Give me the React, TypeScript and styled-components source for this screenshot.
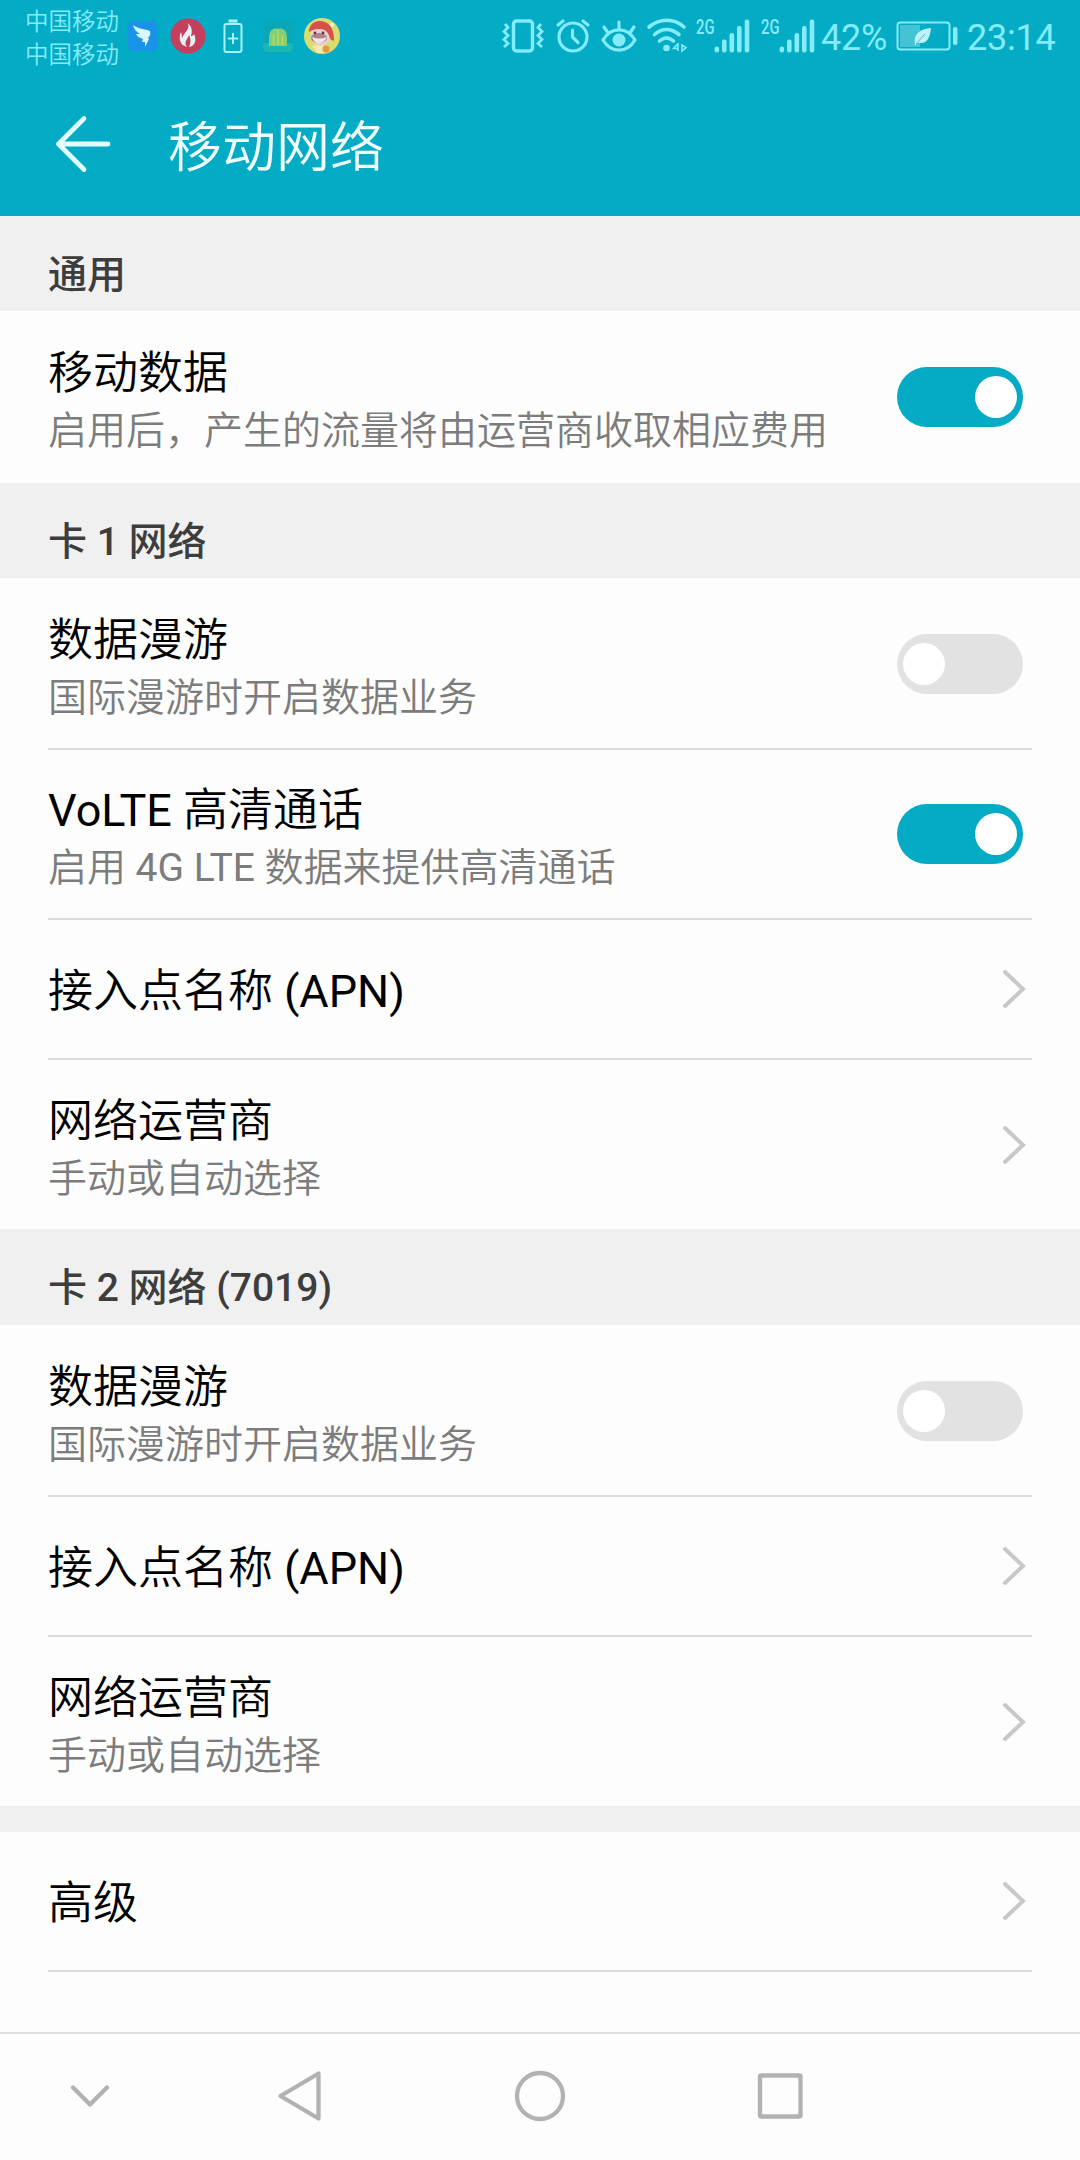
import React from "react";
import styled, { createGlobalStyle } from "styled-components";

const GlobalStyle = createGlobalStyle`
  * { box-sizing: border-box; }
  body { margin: 0; background: #fdfdfd; }
`;

const TEAL = "#04abc5";
const STATUS = "#83ecfb";

const Screen = styled.div`
  width: 1080px;
  height: 2160px;
  display: flex;
  flex-direction: column;
  overflow: hidden;
  background: #fdfdfd;
  font-family: Roboto, "Noto Sans CJK SC", sans-serif;
`;

const Header = styled.header`
  height: 216px;
  flex: none;
  background: ${TEAL};
`;

const StatusBar = styled.div`
  height: 72px;
  display: flex;
  align-items: center;
  padding-left: 25px;
  padding-right: 24px;
  color: ${STATUS};
`;

const Carriers = styled.div`
  display: flex;
  flex-direction: column;
  width: 102px;
  padding-top: 5px;
  font-size: 23.5px;
  line-height: 33px;
  font-weight: 350;
`;

const StatusIcon = styled.svg<{ $ml?: number }>`
  display: block;
  flex: none;
  margin-left: ${(p) => p.$ml ?? 0}px;
`;

const Spacer = styled.div`
  flex: 1;
`;

const StatusText = styled.span<{ $ml: number; $w: number }>`
  flex: none;
  width: ${(p) => p.$w}px;
  margin-left: ${(p) => p.$ml}px;
  padding-top: 3px;
  font-size: 36px;
  line-height: 40px;
  font-weight: 400;
  letter-spacing: -0.2px;
  white-space: nowrap;
`;

const TitleBar = styled.div`
  height: 144px;
  display: flex;
  align-items: center;
  padding-left: 54px;
`;

const Title = styled.h1`
  margin: 0 0 0 54px;
  padding-top: 9px;
  font-size: 54px;
  line-height: 72px;
  font-weight: 350;
  color: #f2ffff;
`;

const List = styled.main`
  flex: none;
  height: 1816px;
`;

const SectionTitle = styled.h2<{ $h?: number }>`
  margin: 0;
  height: ${(p) => p.$h ?? 95}px;
  padding: 31px 0 0 48px;
  background: #f0f0f0;
  color: #3d3d3d;
  font-size: 39px;
  line-height: 56px;
  font-weight: 500;
`;

const Gap = styled.div`
  height: 26px;
  background: #f0f0f0;
`;

const Row = styled.div<{ $h: number; $line?: boolean }>`
  height: ${(p) => p.$h}px;
  margin: 0 48px;
  padding-top: ${(p) => (p.$line && p.$h === 172 ? 2 : 0)}px;
  display: flex;
  align-items: center;
  justify-content: space-between;
  border-bottom: ${(p) => (p.$line ? "2px solid #dcdcdc" : "0")};
`;

const Labels = styled.div<{ $double: boolean }>`
  display: flex;
  flex-direction: column;
  padding-top: ${(p) => (p.$double ? 8 : 6)}px;
`;

const Name = styled.div`
  font-size: 45px;
  line-height: 60px;
  font-weight: 350;
  color: #000;
`;

const Note = styled.div`
  font-size: 39px;
  line-height: 54px;
  font-weight: 350;
  color: #7c7c7c;
`;

const Latin = styled.span`
  font-weight: 400;
`;

const Track = styled.div<{ $on: boolean }>`
  width: 126px;
  height: 60px;
  flex: none;
  margin-right: 9px;
  padding: 0 6px;
  border-radius: 30px;
  display: flex;
  align-items: center;
  justify-content: ${(p) => (p.$on ? "flex-end" : "flex-start")};
  background: ${(p) => (p.$on ? TEAL : "#e2e2e2")};
`;

const Knob = styled.div`
  width: 42px;
  height: 42px;
  border-radius: 50%;
  background: #fff;
`;

const ArrowBox = styled.svg`
  display: block;
  flex: none;
  margin-right: 5px;
`;

const NavBar = styled.nav`
  flex: 1;
  border-top: 2px solid #dfdfdf;
  display: flex;
  align-items: center;
  padding: 0 0 2px 60px;
`;

const NavIcon = styled.svg<{ $ml?: number }>`
  display: block;
  flex: none;
  margin-left: ${(p) => p.$ml ?? 0}px;
  fill: none;
  stroke: #b2b2b2;
  stroke-width: 4.3;
  stroke-linecap: round;
  stroke-linejoin: round;
`;

const Signal = ({ ml }: { ml: number }) => (
  <StatusIcon $ml={ml} width="55" height="44" viewBox="0 -4 55 44" fill={STATUS}>
    <text
      x="0"
      y="16"
      fontFamily="Roboto, sans-serif"
      fontSize="20.5"
      fontWeight="500"
      textLength="18.5"
      lengthAdjust="spacingAndGlyphs"
    >
      2G
    </text>
    <rect x="18.5" y="28.5" width="4.6" height="6" rx="2.2" />
    <rect x="26" y="21.5" width="4.6" height="13" rx="2" />
    <rect x="33.5" y="15" width="4.6" height="19.5" rx="2" />
    <rect x="41" y="8" width="4.6" height="26.5" rx="2" />
    <rect x="48.7" y="1.5" width="4.6" height="33" rx="2" />
  </StatusIcon>
);

const Arrow = () => (
  <ArrowBox width="26" height="42" viewBox="0 0 26 42" fill="none" stroke="#c8c8c8" strokeWidth="4" strokeLinecap="round">
    <path d="M4 4 L22 21 L4 38" />
  </ArrowBox>
);

// Latin runs keep the regular weight next to the lighter Chinese glyphs.
const mixed = (text: string) =>
  text
    .split(/([A-Za-z0-9()][A-Za-z0-9() ]*)/)
    .map((part, i) => (i % 2 ? <Latin key={i}>{part}</Latin> : part));

type ItemProps = {
  name: string;
  note?: string;
  on?: boolean;
  h: number;
  line?: boolean;
};

const Item = ({ name, note, on, h, line }: ItemProps) => (
  <Row $h={h} $line={line}>
    <Labels $double={!!note}>
      <Name>{mixed(name)}</Name>
      {note && <Note>{mixed(note)}</Note>}
    </Labels>
    {on === undefined ? (
      <Arrow />
    ) : (
      <Track $on={on}>
        <Knob />
      </Track>
    )}
  </Row>
);

export default function App() {
  return (
    <Screen lang="zh-CN">
      <GlobalStyle />
      <Header>
        <StatusBar>
          <Carriers>
            <span>中国移动</span>
            <span>中国移动</span>
          </Carriers>
          <StatusIcon $ml={1} width="30" height="32" viewBox="0 0 30 32">
            <rect x="0" y="1" width="30" height="30" rx="5" fill="#1893e8" />
            <path d="M5 5 C10 9 17 9 22 11 C23 15 21 17 20 18 L21 19 L17 27 L17 22 L14 22 L15 19 C11 18 9 16 8 14 L12 14 C8 12 6 9 5 5Z" fill="#d8f6ff" />
          </StatusIcon>
          <StatusIcon $ml={12} width="36" height="36" viewBox="0 0 36 36">
            <circle cx="18" cy="18" r="17.5" fill="#c53f5d" />
            <path d="M18 5 C20 11 15 14 13 18 C10 23 13 28 17 29 C13 24 18 21 19 17 C21 21 21 24 19 29 C25 28 27 22 24 16 C23 18 22 18 21 18 C23 12 21 8 18 5Z M11 14 C9 18 9 25 14 28 C11 23 13 19 11 14Z" fill="#e5f1f4" />
          </StatusIcon>
          <StatusIcon $ml={17} width="20" height="36" viewBox="0 0 20 36" fill="none" stroke="#a5f2f8" strokeWidth="2">
            <path d="M5.5 3 H14.5" strokeWidth="3" />
            <rect x="1.5" y="6" width="17" height="28" rx="2" />
            <path d="M10 15 V26 M4.8 20.5 H15.2" />
          </StatusIcon>
          <StatusIcon $ml={20} width="30" height="34" viewBox="0 0 30 34">
            <rect width="30" height="33" y="1" rx="5" fill="#08a8ba" />
            <path d="M0 24 H30 V28 Q30 33 25 33 H5 Q0 33 0 28Z" fill="#17b9b1" />
            <path d="M6 27 V19 C6 13 9 9.500 12 9.500 H18 C21 9.500 24 13 24 19 V27Z" fill="#83cf77" />
            <path d="M10.500 26 V16 M19.500 26 V16 M15 11 V26" stroke="#bddb5e" strokeWidth="1.5" />
          </StatusIcon>
          <StatusIcon $ml={11} width="36" height="36" viewBox="0 0 36 36">
            <circle cx="18" cy="18" r="18" fill="#d9dd70" />
            <circle cx="17" cy="17" r="10.5" fill="#e8d0cb" />
            <path d="M5 14 C5 5 13 1 21 4 C27 6 30 13 30 23 L26 21 C25 14 21 11 15 11 C11 11 8 12 5 14Z" fill="#d6504c" />
            <ellipse cx="15" cy="20" rx="8" ry="5" fill="#b27f8c" />
            <path d="M8 19 Q15 22 23 19 Q20 25 15 25 Q10 25 8 19Z" fill="#efe8e9" />
            <circle cx="11" cy="15" r="1.4" fill="#553a49" />
            <circle cx="19" cy="15" r="1.4" fill="#553a49" />
            <path d="M8 28 Q16 26 24 29 L20 35 H14Z" fill="#f4e8b5" />
            <circle cx="22" cy="31" r="3.5" fill="#e99544" />
            <circle cx="28" cy="7" r="2" fill="#f2f4dc" />
          </StatusIcon>
          <Spacer />
          <StatusIcon width="42" height="36" viewBox="0 0 42 36" fill="none" stroke={STATUS} strokeWidth="3">
            <rect x="11.5" y="3" width="19" height="30" rx="3" strokeWidth="3.5" />
            <path d="M3 6 L6 9.5 L2 13.5 L6 17.5 L2 21.5 L6 25.5 L2 29 M39 6 L36 9.5 L40 13.5 L36 17.5 L40 21.5 L36 25.5 L40 29" strokeWidth="2.8" />
          </StatusIcon>
          <StatusIcon $ml={11} width="36" height="36" viewBox="0 0 36 36" fill="none" stroke={STATUS} strokeWidth="3.2" strokeLinecap="round">
            <circle cx="18" cy="19" r="14" />
            <path d="M3 7 L8 3 M33 7 L28 3 M17.5 12 V19 L23 24.5" />
          </StatusIcon>
          <StatusIcon $ml={9} width="38" height="36" viewBox="0 0 38 36" fill="none" stroke={STATUS} strokeWidth="3.2" strokeLinecap="round">
            <path d="M3 22 C11 8.500 27 8.500 35 22 C27 35.500 11 35.500 3 22Z" />
            <circle cx="19" cy="22" r="6.500" fill={STATUS} stroke="none" />
            <path d="M19 4 V11 M4 9 L7.500 14 M34 9 L30.500 14" />
          </StatusIcon>
          <StatusIcon $ml={8} width="42" height="36" viewBox="0 0 42 36" fill="none" stroke={STATUS} strokeWidth="3.6" strokeLinecap="round">
            <path d="M3 9 C14 0 28 0 38 9 M8.500 16.500 C16 10 25 10 33 16.500 M13.500 23 C18 19 23 19 27.500 23" />
            <circle cx="20.500" cy="30" r="3.300" fill={STATUS} stroke="none" />
            <path d="M32 25.500 V33 L32 30.500 H27.500 L32 25.500 M36 27 V33 M36 27 L40 29.500 L36 33Z" strokeWidth="1.600" />
          </StatusIcon>
          <Signal ml={8} />
          <Signal ml={10} />
          <StatusText $ml={5} $w={66}>42%</StatusText>
          <StatusIcon $ml={9} width="62" height="30" viewBox="0 0 62 30" fill="none" stroke={STATUS} strokeWidth="2">
            <rect x="4" y="4" width="20" height="22" fill="#44c3d5" stroke="none" />
            <rect x="1.500" y="1.500" width="52" height="27" rx="3" />
            <rect x="57" y="6" width="4.500" height="18" rx="2" fill={STATUS} stroke="none" />
            <path d="M19 23 C17 13 24 8 35 7 C34 18 30 24 22 21.500 L19.500 24.500Z" fill="#bdf3f8" stroke="none" />
            <path d="M20 23 L29 13" stroke="#49bdcd" strokeWidth="1" />
          </StatusIcon>
          <StatusText $ml={9} $w={89}>23:14</StatusText>
        </StatusBar>
        <TitleBar>
          <svg width="60" height="60" viewBox="0 0 60 60" fill="none" stroke="#e2ffff" strokeWidth="4.800" strokeLinecap="round" strokeLinejoin="round">
            <path d="M30 4.500 L4.500 30 L30 55.500 M4.500 30 H54" />
          </svg>
          <Title>移动网络</Title>
        </TitleBar>
      </Header>

      <List>
        <SectionTitle>通用</SectionTitle>
        <Item name="移动数据" note="启用后，产生的流量将由运营商收取相应费用" on h={172} />
        <SectionTitle>卡 1 网络</SectionTitle>
        <Item name="数据漫游" note="国际漫游时开启数据业务" on={false} h={172} line />
        <Item name="VoLTE 高清通话" note="启用 4G LTE 数据来提供高清通话" on h={170} line />
        <Item name="接入点名称 (APN)" h={140} line />
        <Item name="网络运营商" note="手动或自动选择" h={169} />
        <SectionTitle $h={96}>卡 2 网络 (7019)</SectionTitle>
        <Item name="数据漫游" note="国际漫游时开启数据业务" on={false} h={172} line />
        <Item name="接入点名称 (APN)" h={140} line />
        <Item name="网络运营商" note="手动或自动选择" h={169} />
        <Gap />
        <Item name="高级" h={140} line />
      </List>

      <NavBar>
        <NavIcon width="60" height="60" viewBox="0 0 60 60">
          <path d="M13 21.500 L30 38.500 L47 21.500" />
        </NavIcon>
        <NavIcon $ml={150} width="60" height="60" viewBox="0 0 60 60">
          <path d="M10.500 30 L48.500 7.500 V52.500Z" />
        </NavIcon>
        <NavIcon $ml={180} width="60" height="60" viewBox="0 0 60 60">
          <circle cx="30" cy="30" r="23" />
        </NavIcon>
        <NavIcon $ml={180} width="60" height="60" viewBox="0 0 60 60">
          <rect x="10" y="9.500" width="40.500" height="41" rx="1" />
        </NavIcon>
      </NavBar>
    </Screen>
  );
}
